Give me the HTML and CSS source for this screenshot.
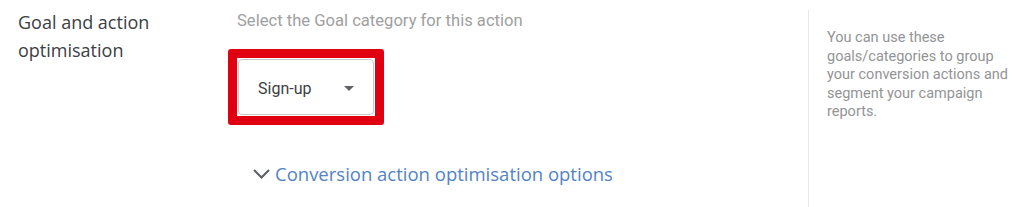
FILE: index.html
```html
<!DOCTYPE html>
<html lang="en">
<head>
    <meta charset="UTF-8" />
    <link rel="stylesheet" href="styles.css">
    <title>Goal and action optimisation</title>
</head>
<body>
    <div class="section">
        <div class="label">Goal and action optimisation</div>
        <div class="main">
            <div class="hint">Select the Goal category for this action</div>
            <div class="highlight">
                <div class="select">
                    <span class="value">Sign-up</span>
                    <span class="arrow"></span>
                </div>
            </div>
            <div class="expander">
                <svg class="chevron" width="19" height="12" viewBox="0 0 19 12">
                    <path d="M2 2 L9.5 9.5 L17 2" fill="none" stroke="#5f6368" stroke-width="2.2" />
                </svg>
                <span class="link">Conversion action optimisation options</span>
            </div>
        </div>
        <div class="aside">
            You can use these goals/categories to group your conversion actions and segment your campaign reports.
        </div>
    </div>
</body>
</html>
```

FILE: styles.css
```css
* {
    box-sizing: border-box;
    margin: 0;
    padding: 0;
}
body {
    background: #fff;
    font-family: Roboto, "Liberation Sans", sans-serif;
    overflow: hidden;
}
.section {
    display: flex;
    height: 207px;
}
.label {
    width: 228px;
    padding: 8px 0 0 18px;
    font-family: "Open Sans", Roboto, sans-serif;
    font-size: 18px;
    line-height: 28px;
    color: #3c4043;
}
.main {
    width: 580px;
    padding-top: 11px;
}
.hint {
    padding-left: 9px;
    font-size: 16.6px;
    line-height: 20px;
    color: #a0a0a0;
}
.highlight {
    margin-top: 18px;
    width: 156px;
    height: 76px;
    border: 9px solid #e00012;
    border-radius: 3px;
    padding: 1px;
}
.select {
    display: flex;
    align-items: center;
    justify-content: space-between;
    height: 100%;
    border: 1px solid #c8c8c8;
    border-radius: 4px;
    padding: 3px 19px 0 19px;
}
.value {
    font-size: 16px;
    color: #3c4043;
}
.arrow {
    width: 0;
    height: 0;
    border-left: 5px solid transparent;
    border-right: 5px solid transparent;
    border-top: 5px solid #5f6368;
}
.expander {
    display: flex;
    align-items: center;
    gap: 4px;
    margin-top: 36px;
    padding-left: 24px;
}
.link {
    font-family: "Open Sans", Roboto, sans-serif;
    font-size: 18.5px;
    color: #5283c6;
}
.aside {
    flex: 1;
    margin-top: 10px;
    border-left: 1px solid #e8e8e8;
    padding: 19px 6px 0 18px;
    font-size: 14.5px;
    line-height: 18.5px;
    color: #929496;
}
```
